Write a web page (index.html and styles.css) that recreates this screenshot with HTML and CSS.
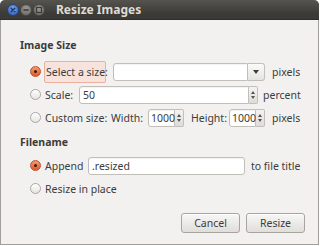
FILE: index.html
```html
<!DOCTYPE html>
<html lang="en">
<head>
    <meta charset="UTF-8">
    <title>Resize Images</title>
    <link rel="stylesheet" href="styles.css">
</head>
<body>
    <div class="window">
        <div class="titlebar">
            <span class="wm-btn wm-close">
                <svg width="12" height="12" viewBox="0 0 12 12"><path d="M4.2 4.2 L7.8 7.8 M7.8 4.2 L4.2 7.8" stroke="#1d3560" stroke-width="1.4" stroke-linecap="round"/></svg>
            </span>
            <span class="wm-btn wm-min">
                <svg width="12" height="12" viewBox="0 0 12 12"><path d="M3.5 6 H8.5" stroke="#3c3b37" stroke-width="1.6"/></svg>
            </span>
            <span class="wm-btn wm-max">
                <svg width="12" height="12" viewBox="0 0 12 12"><rect x="3.5" y="3.5" width="5" height="5" fill="none" stroke="#3c3b37" stroke-width="1.2"/></svg>
            </span>
            <span class="title">Resize Images</span>
        </div>

        <div class="content">
            <div class="section-title">Image Size</div>

            <div class="row">
                <span class="radio checked"></span>
                <span class="label focus w-select">Select a size:</span>
                <span class="entry w-combo"></span>
                <span class="combo-btn"><span class="tri-down"></span></span>
                <span class="unit ml-7">pixels</span>
            </div>

            <div class="row">
                <span class="radio"></span>
                <span class="label w-scale">Scale:</span>
                <span class="entry w-scale-entry">50</span>
                <span class="spin"><span class="tri-up"></span><span class="tri-dn"></span></span>
                <span class="unit ml-5">percent</span>
            </div>

            <div class="row">
                <span class="radio"></span>
                <span class="label w-custom">Custom size:</span>
                <span class="label w-width">Width:</span>
                <span class="entry w-num">1000</span>
                <span class="spin"><span class="tri-up"></span><span class="tri-dn"></span></span>
                <span class="label ml-7 w-height">Height:</span>
                <span class="entry w-num">1000</span>
                <span class="spin"><span class="tri-up"></span><span class="tri-dn"></span></span>
                <span class="unit ml-7">pixels</span>
            </div>

            <div class="section-title second">Filename</div>

            <div class="row">
                <span class="radio checked"></span>
                <span class="label w-append">Append</span>
                <span class="entry w-suffix">.resized</span>
                <span class="unit ml-6">to file title</span>
            </div>

            <div class="row">
                <span class="radio"></span>
                <span class="label">Resize in place</span>
            </div>
        </div>

        <div class="actions">
            <button class="btn">Cancel</button>
            <button class="btn">Resize</button>
        </div>
    </div>
</body>
</html>
```

FILE: styles.css
```css
* {
    margin: 0;
    padding: 0;
    box-sizing: border-box;
}

body {
    background: #ffffff;
    font-family: 'Noto Sans', 'Open Sans', sans-serif;
    font-size: 10.5px;
    color: #3c3c3c;
}

.window {
    width: 319px;
    height: 245px;
    background: #f2f1f0;
    border: 1px solid #a19e9a;
    border-top: none;
    border-radius: 5px 5px 0 0;
    display: flex;
    flex-direction: column;
}

.titlebar {
    height: 20px;
    margin: 0 -1px;
    background: linear-gradient(#55544f, #3c3b37 70%, #3a3935);
    border-radius: 5px 5px 0 0;
    border-bottom: 1px solid #2f2e2b;
    display: flex;
    align-items: center;
    padding-left: 7px;
}

.wm-btn {
    width: 12px;
    height: 12px;
    border-radius: 50%;
    display: flex;
    margin-right: 1px;
}

.wm-close {
    background: radial-gradient(circle at 50% 35%, #7fa8e8, #3c6fc7 70%, #2d559c);
    border: 1px solid #23457f;
}

.wm-min,
.wm-max {
    background: radial-gradient(circle at 50% 35%, #9b9994, #76746f 70%, #5e5c58);
    border: 1px solid #4a4945;
}

.wm-min svg,
.wm-max svg,
.wm-close svg {
    margin: -1px;
}

.title {
    margin-left: 10px;
    font-weight: bold;
    font-size: 12px;
    color: #dfdbd2;
    white-space: nowrap;
}

.content {
    padding-top: 17px;
}

.section-title {
    height: 16px;
    line-height: 16px;
    padding-left: 19px;
    font-weight: bold;
    margin-bottom: 7px;
}

.section-title.second {
    margin-top: 5px;
    margin-bottom: 4px;
}

.row {
    height: 23px;
    display: flex;
    align-items: center;
    padding-left: 29px;
    white-space: nowrap;
}

.radio {
    width: 11px;
    height: 11px;
    border-radius: 50%;
    border: 1px solid #a9a7a3;
    background: linear-gradient(#ffffff, #e6e4e1);
    flex-shrink: 0;
    margin-right: 4px;
    display: flex;
    align-items: center;
    justify-content: center;
}

.radio.checked {
    border-color: #b8522c;
    background: linear-gradient(#f39a70, #e0582b);
}

.radio.checked::after {
    content: "";
    width: 3px;
    height: 3px;
    border-radius: 50%;
    background: #3a1a0e;
}

.label {
    display: inline-block;
    overflow: visible;
}

.focus {
    margin-left: -1px;
    height: 22px;
    line-height: 20px;
    padding: 0 1px;
    background: #f7e3db;
    border: 1px solid #e9b29e;
    border-radius: 2px;
}

.w-select { width: 62px; margin-right: 7px; }
.w-scale { width: 34px; }
.w-custom { width: 66px; }
.w-width { width: 37px; }
.w-height { width: 38px; }
.w-append { width: 43px; }

.entry {
    height: 18px;
    line-height: 16px;
    background: #ffffff;
    border: 1px solid #c2bfbb;
    border-radius: 3px 0 0 3px;
    padding-left: 3px;
    color: #3c3c3c;
    box-shadow: inset 0 1px 1px rgba(0, 0, 0, 0.05);
}

.w-combo { width: 135px; }
.w-scale-entry { width: 170px; }
.w-num { width: 27px; padding-left: 2px; }
.w-suffix { width: 157px; border-radius: 3px; }

.combo-btn {
    width: 17px;
    height: 18px;
    border: 1px solid #c2bfbb;
    border-left: none;
    border-radius: 0 3px 3px 0;
    background: linear-gradient(#fbfbfa, #e5e3e0);
    display: flex;
    align-items: center;
    justify-content: center;
}

.tri-down {
    width: 0;
    height: 0;
    border-left: 3.5px solid transparent;
    border-right: 3.5px solid transparent;
    border-top: 4px solid #3c3c3c;
}

.spin {
    width: 9px;
    height: 18px;
    border: 1px solid #c2bfbb;
    border-left: none;
    border-radius: 0 2px 2px 0;
    background: linear-gradient(#f4f3f1, #dedcd9);
    display: flex;
    flex-direction: column;
    align-items: center;
    justify-content: center;
    gap: 2px;
}

.tri-up,
.tri-dn {
    width: 0;
    height: 0;
    border-left: 2.5px solid transparent;
    border-right: 2.5px solid transparent;
}

.tri-up { border-bottom: 3px solid #555452; }
.tri-dn { border-top: 3px solid #555452; }

.ml-5 { margin-left: 5px; }
.ml-6 { margin-left: 6px; }
.ml-7 { margin-left: 7px; }

.actions {
    margin-top: 13px;
    display: flex;
    justify-content: flex-end;
    gap: 6px;
    padding-right: 13px;
}

.btn {
    width: 59px;
    height: 20px;
    font-family: inherit;
    font-size: 10.5px;
    color: #3c3c3c;
    background: linear-gradient(#f8f7f6, #e0dedb);
    border: 1px solid #a8a5a1;
    border-radius: 3px;
    box-shadow: inset 0 1px 0 #ffffff;
}
```
